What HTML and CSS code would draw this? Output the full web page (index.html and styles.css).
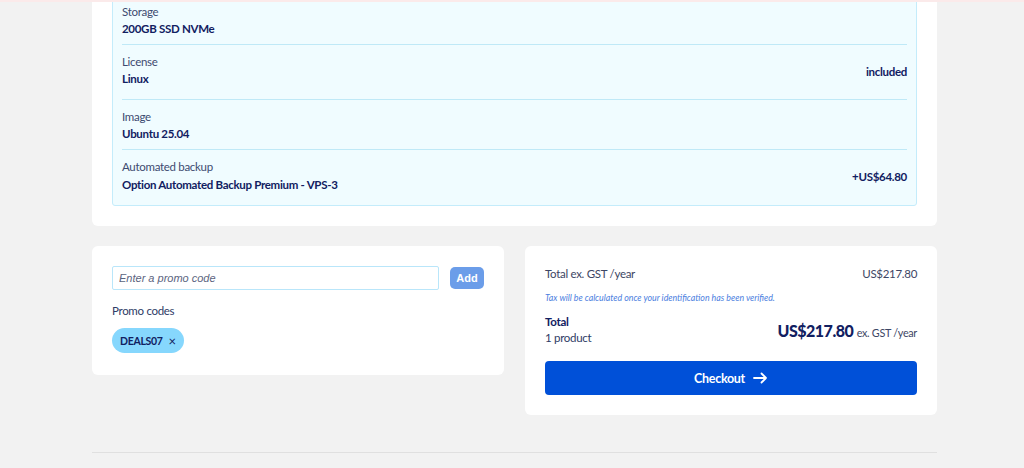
FILE: index.html
```html
<!DOCTYPE html>
<html lang="en">
<head>
<meta charset="utf-8">
<title>Cart</title>
<link rel="stylesheet" href="styles.css">
</head>
<body>
<div class="topline"></div>
<main class="page">
  <section class="card config">
    <div class="details">
      <div class="row">
        <div class="row-main">
          <div class="label">Storage</div>
          <div class="value">200GB SSD NVMe</div>
        </div>
      </div>
      <div class="row row-priced">
        <div class="row-main">
          <div class="label">License</div>
          <div class="value">Linux</div>
        </div>
        <div class="price">included</div>
      </div>
      <div class="row">
        <div class="row-main">
          <div class="label">Image</div>
          <div class="value">Ubuntu 25.04</div>
        </div>
      </div>
      <div class="row row-priced row-last">
        <div class="row-main">
          <div class="label">Automated backup</div>
          <div class="value">Option Automated Backup Premium - VPS-3</div>
        </div>
        <div class="price">+US$64.80</div>
      </div>
    </div>
  </section>

  <div class="bottom">
    <section class="card promo">
      <div class="promo-form">
        <input class="promo-input" type="text" placeholder="Enter a promo code">
        <button class="btn-add" type="button">Add</button>
      </div>
      <div class="promo-title">Promo codes</div>
      <div class="chips">
        <span class="chip">DEALS07 <span class="chip-x">×</span></span>
      </div>
    </section>

    <section class="card summary">
      <div class="sum-line">
        <span>Total ex. GST /year</span>
        <span>US$217.80</span>
      </div>
      <p class="tax-note">Tax will be calculated once your identification has been verified.</p>
      <div class="total">
        <div class="total-left">
          <div class="total-title">Total</div>
          <div class="total-sub">1 product</div>
        </div>
        <div class="total-price"><strong>US$217.80</strong> ex. GST /year</div>
      </div>
      <button class="btn-checkout" type="button">Checkout
        <svg class="arrow" width="15" height="12" viewBox="0 0 15 12" aria-hidden="true"><path d="M1 6H13M8.5 1.5L13 6L8.5 10.5" fill="none" stroke="#fff" stroke-width="1.8" stroke-linecap="round" stroke-linejoin="round"/></svg>
      </button>
    </section>
  </div>

  <hr class="divider">
</main>
</body>
</html>
```

FILE: styles.css
```css
* { box-sizing: border-box; }

html, body {
  margin: 0;
  padding: 0;
  background: #f2f2f2;
  font-family: Lato, "Noto Sans", "Liberation Sans", sans-serif;
  color: #1b2b5e;
  overflow: hidden;
}

.topline {
  position: fixed;
  top: 0;
  left: 0;
  right: 0;
  height: 2px;
  background: #fbeaea;
  z-index: 5;
}

.page {
  width: 845px;
  margin: -26px 0 0 92px;
  letter-spacing: -0.3px;
}

.card {
  background: #fff;
  border-radius: 6px;
  padding: 20px;
}

.details {
  background: #f0fcff;
  border: 1px solid #c4ecfb;
  border-radius: 3px;
  padding: 0 9px;
}

.row {
  display: flex;
  align-items: center;
  justify-content: space-between;
  padding: 9px 0 6px;
  border-bottom: 1px solid #bfe9f7;
}

.row-priced { padding-bottom: 11px; }
.row-last { border-bottom: 0; }

.label {
  font-size: 11.5px;
  line-height: 16px;
  color: #3d4a70;
}

.value {
  font-size: 11.5px;
  line-height: 18px;
  font-weight: 700;
  color: #112061;
}

.row-last .value { margin-top: 1px; }

.price {
  font-size: 11.5px;
  font-weight: 700;
  color: #112061;
}

.bottom {
  display: flex;
  align-items: flex-start;
  gap: 21px;
  margin-top: 20px;
}

.bottom .card { flex: 1 1 0; }

.promo {
  padding-bottom: 22px;
}

.promo-form {
  display: flex;
  align-items: center;
  gap: 11px;
}

.promo-input {
  flex: 1;
  height: 24px;
  border: 1px solid #b9e6fa;
  border-radius: 2px;
  padding: 0 6px;
  font-family: "Liberation Sans", Arial, sans-serif;
  font-size: 11px;
  font-style: italic;
  color: #33405f;
  background: #fff;
  outline: none;
}

.promo-input::placeholder {
  color: #5b6480;
  font-style: italic;
}

.btn-add {
  height: 22px;
  width: 34px;
  border: 0;
  border-radius: 5px;
  background: #6b9de9;
  color: #fff;
  font-family: "Liberation Sans", Arial, sans-serif;
  font-weight: 700;
  font-size: 11px;
  padding: 0;
}

.promo-title {
  margin-top: 13px;
  font-size: 11.5px;
  line-height: 16px;
  color: #2e3b66;
}

.chips {
  display: flex;
  margin-top: 9px;
}

.chip {
  display: inline-flex;
  align-items: center;
  height: 25px;
  padding: 0 8px 0 8px;
  border-radius: 13px;
  background: #86d7fd;
  font-size: 10.5px;
  font-weight: 700;
  color: #112061;
}

.chip-x {
  margin-left: 6px;
  font-weight: 400;
  font-size: 13px;
}

.sum-line {
  display: flex;
  justify-content: space-between;
  font-size: 11.5px;
  line-height: 16px;
  color: #3d4664;
}

.tax-note {
  margin: 10px 0 0;
  font-size: 8.8px;
  font-style: italic;
  line-height: 12px;
  letter-spacing: 0;
  color: #4b7ee0;
}

.total {
  display: flex;
  justify-content: space-between;
  align-items: center;
  margin-top: 10px;
}

.total-title {
  font-size: 11.5px;
  line-height: 16px;
  font-weight: 700;
  color: #112061;
}

.total-sub {
  font-size: 11.5px;
  line-height: 16px;
  color: #2e3b66;
}

.total-price {
  font-size: 10.8px;
  color: #3d4664;
}

.total-price strong {
  font-size: 16px;
  font-weight: 900;
  letter-spacing: -0.5px;
  color: #112061;
  margin-right: 1px;
}

.btn-checkout {
  display: flex;
  align-items: center;
  justify-content: center;
  gap: 8px;
  width: 100%;
  height: 34px;
  margin-top: 15px;
  border: 0;
  border-radius: 4px;
  background: #0050d8;
  color: #fff;
  font-family: Lato, "Noto Sans", sans-serif;
  font-size: 12.5px;
  font-weight: 700;
  letter-spacing: -0.3px;
}

.divider {
  margin: 37px 0 0;
  border: 0;
  border-top: 1px solid #e0e0e0;
}
```
